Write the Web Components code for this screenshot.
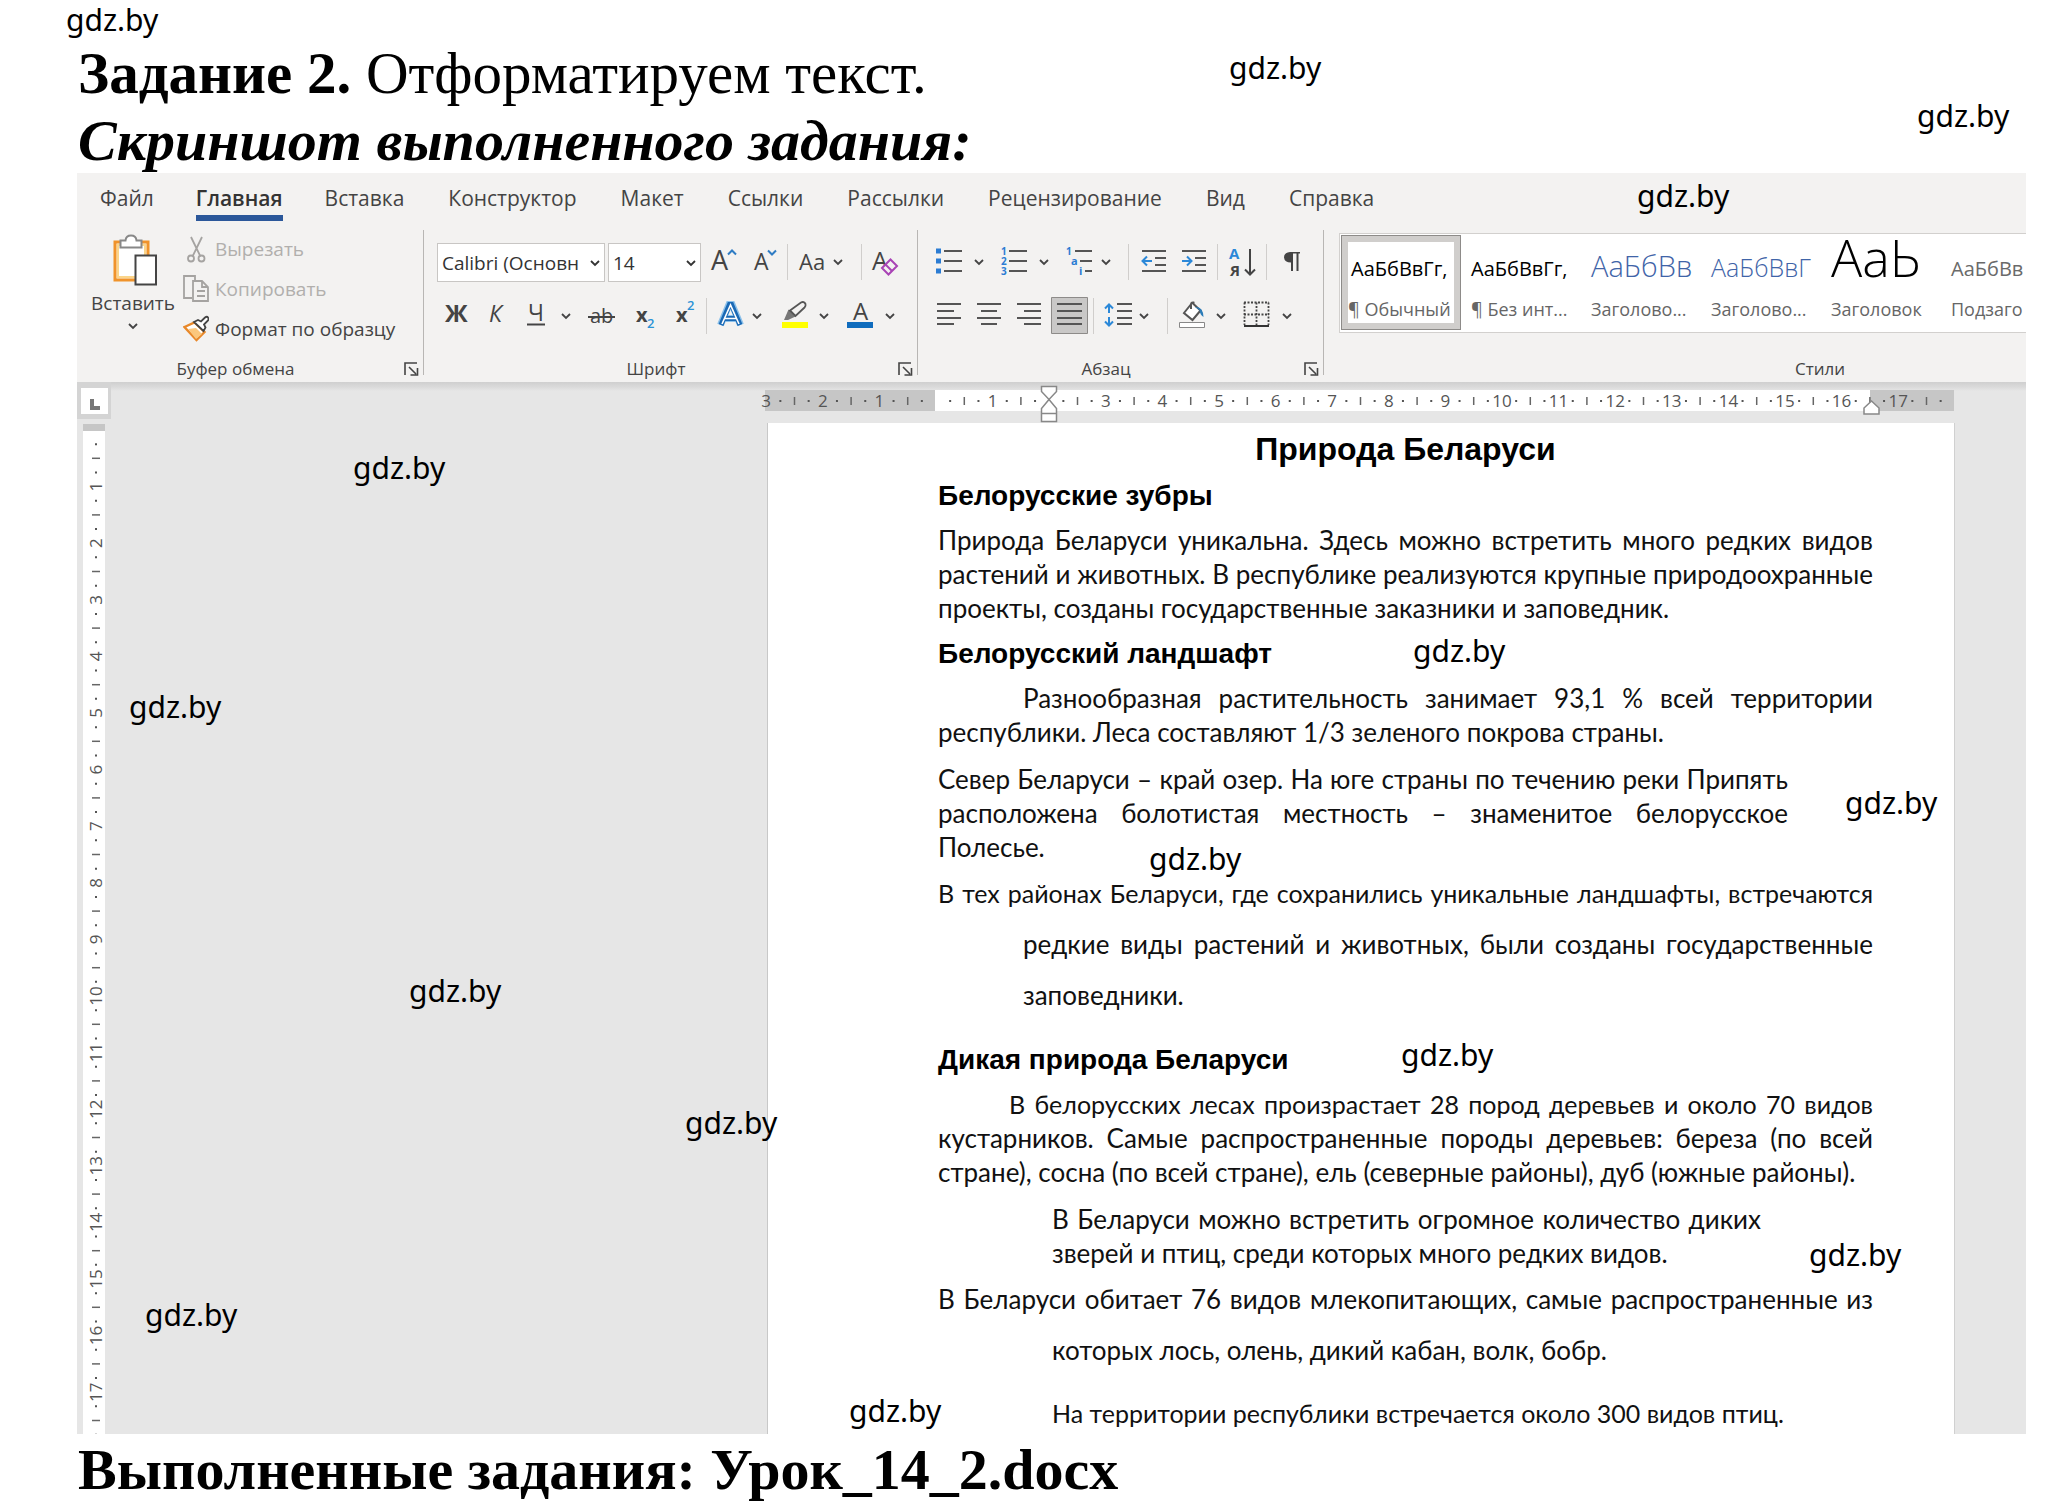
<!DOCTYPE html>
<html lang="ru">
<head>
<meta charset="utf-8">
<title>Задание 2. Отформатируем текст</title>
<style>
html,body{margin:0;background:#fff}
body{overflow-x:hidden}
</style>
</head>
<body>
<worksheet-page></worksheet-page>
<script>
const define=(name,html,after)=>{
  const t=document.createElement('template');
  t.innerHTML=html;
  customElements.define(name,class extends HTMLElement{
    constructor(){super();this.attachShadow({mode:'open'});}
    connectedCallback(){
      if(this.shadowRoot.childNodes.length)return;
      this.shadowRoot.append(t.content.cloneNode(true));
      if(after)after(this,this.shadowRoot);
    }
  });
};
const UI='"Open Sans","Noto Sans",sans-serif';

/* ---------- stamps laid over the sheet ---------- */
define('water-mark',`<style>
:host{position:absolute;font:30px/41px "Noto Sans",sans-serif;color:#000;pointer-events:none;white-space:nowrap}
</style><slot></slot>`);

/* ---------- ribbon tabs ---------- */
define('ribbon-tabs',`<style>
:host{display:block;font:21px/28px ${UI};color:#444}
nav{display:flex;gap:44px;padding:11px 0 0 23px}
a{color:inherit;text-decoration:none;white-space:nowrap;padding-bottom:3px;height:28px;border-bottom:6px solid transparent}
a[aria-current]{font-weight:600;color:#333;border-color:#2b579a;margin:0 -2px}
</style><nav></nav>`,(el,root)=>{
  const nav=root.querySelector('nav');
  ['Файл','Главная','Вставка','Конструктор','Макет','Ссылки','Рассылки','Рецензирование','Вид','Справка'].forEach((n,i)=>{
    const a=document.createElement('a');a.href='#';a.textContent=n;
    if(i===1)a.setAttribute('aria-current','page');
    nav.append(a);
  });
});

/* ---------- ribbon group: tools, caption, launcher ---------- */
define('ribbon-group',`<style>
:host{display:flex;flex-direction:column;flex:none;box-sizing:border-box;height:145px;border-right:1px solid #b8b6b4;font-family:${UI}}
.body{flex:1}
footer{display:flex;align-items:center;height:22px;margin-bottom:-5px}
span{flex:1;text-align:center;font-size:17px;line-height:22px;color:#444}
button{flex:none;width:29px;height:22px;padding:0 0 0 10px;border:0;background:none}
svg{display:block}
:host([plain]) button{display:none}
:host([plain]){border:0}
</style><div class="body"><slot></slot></div>
<footer><span></span><button aria-label="Параметры"><svg width="15" height="15" viewBox="0 0 15 15" fill="none" stroke="#444" stroke-width="1.6"><path d="M1 13V1H13M5 5L12 12M13.500 6V13H6.500"/></svg></button></footer>`,
(el,root)=>{root.querySelector('span').textContent=el.getAttribute('caption');});

/* ---------- row of tool buttons; every glyph is drawn in the row's own coordinates ---------- */
const chev=(x,y)=>`<path d="M${x-4} ${y-2}l4 4 4-4" fill="none" stroke="#444" stroke-width="1.800"/>`;
const line=(x1,x2,y,c='#555')=>`<path d="M${x1} ${y}H${x2}" stroke="${c}" stroke-width="2"/>`;
const txt=(x,y,s,t,extra='')=>`<text x="${x}" y="${y}" font-size="${s}" fill="#444" ${extra}>${t}</text>`;
const sep='|';
const ROWS={
 font1:{y:235,items:[
  [701,745,'Увеличить размер шрифта',txt(711,270,27,'А')+'<path d="M728 254.500l4-4 4 4" fill="none" stroke="#2e7cc4" stroke-width="2"/>'],
  [745,786,'Уменьшить размер шрифта',txt(754,270,23,'А')+'<path d="M768 250.500l4 4 4-4" fill="none" stroke="#2e7cc4" stroke-width="2"/>'],
  sep,[789,860,'Регистр',txt(799,270,22,'Аа')+chev(838,262)],
  sep,[863,909,'Очистить формат',txt(872,270,25,'А')+'<path d="M882 268l8.500-8.500 6.500 6.500-8.500 8.500z" fill="#f3f2f1" stroke="#a843b5" stroke-width="2"/><path d="M885.500 264.500l6.500 6.500" stroke="#a843b5" stroke-width="2"/>']]},
 font2:{y:289,items:[
  [437,475,'Полужирный',txt(445,322,24,'Ж','font-weight="700"')],
  [475,516,'Курсив',txt(489,322,23,'К','font-style="italic"')],
  [516,556,'Подчёркнутый',txt(528,321,23,'Ч')+line(527,545,324.500,'#444')],
  [556,576,'Вид подчёркивания',chev(566,316)],
  [576,626,'Зачёркнутый',txt(590,323,20,'ab')+line(588,615,317,'#444')],
  [626,665,'Подстрочный знак',txt(636,322,20,'x','font-weight="700"')+txt(647,328,13,'2','font-weight="600" style="fill:#2b93d6"')],
  [665,705,'Надстрочный знак',txt(676,322,20,'x','font-weight="700"')+txt(687,310,13,'2','font-weight="600" style="fill:#2b93d6"')],
  sep,[708,748,'Текстовые эффекты','<g fill="none" stroke-linejoin="miter"><path d="M720.500 325L729 304.500H732L740.500 325M724.500 318.500H736.500" stroke="#8cc1ea" stroke-width="7"/><path d="M721 325L729.500 304.500H731.500L740 325M724.500 318.500H736.500" stroke="#1a69b5" stroke-width="5"/><path d="M722 324L730.500 305L739 324M725 318.500H736" stroke="#fff" stroke-width="1.600"/></g>'],
  [748,768,'Ещё эффекты',chev(757,316)],
  [768,814,'Цвет выделения','<path d="M784 320l4.500-10.500 7 7L788 320zM785 320.500l4-1" fill="#777"/><path d="M790 310.500L801 302.500Q804 301 805.500 304Q806 306 804.500 307.500L795.500 316z" fill="#f3f2f1" stroke="#555" stroke-width="1.800"/><path d="M782 322h26v6h-26z" fill="#ff0"/>'],
  [814,834,'Ещё цвета выделения',chev(824,316)],
  [834,880,'Цвет текста',txt(853,320,24,'А')+'<path d="M847 322h26v6h-26z" fill="#0f6cbd"/>'],
  [880,900,'Ещё цвета текста',chev(890,316)]]},
 par1:{y:235,items:[
  [931,969,'Маркеры','<path d="M936 248.500h5v5h-5zM936 258.500h5v5h-5zM936 268.500h5v5h-5z" fill="#2b7cd3"/>'+line(944,962,251)+line(944,962,261)+line(944,962,271)],
  [969,990,'Вид маркеров',chev(979,262)],
  [990,1034,'Нумерация',['1','2','3'].map((n,i)=>txt(1001,255+i*10,10,n,'font-weight="700" style="fill:#2b7cd3"')).join('')+line(1009,1027,251)+line(1009,1027,261)+line(1009,1027,271)],
  [1034,1055,'Вид нумерации',chev(1044,262)],
  [1055,1097,'Многоуровневый список',txt(1066,255,10,'1','font-weight="700" style="fill:#2b7cd3"')+txt(1071,265,11,'a','font-weight="700" style="fill:#2b7cd3"')+txt(1079,275,11,'i','font-weight="700" style="fill:#2b7cd3"')+line(1075,1092,251)+line(1080,1092,261)+line(1085,1092,271)],
  [1097,1127,'Вид списка',chev(1106,262)],
  sep,[1130,1174,'Уменьшить отступ',line(1142,1166,251)+line(1155,1166,258)+line(1155,1166,265)+line(1142,1166,271)+'<path d="M1152 261H1143M1147 256.500L1142.500 261L1147 265.500" fill="none" stroke="#2b88d8" stroke-width="2"/>'],
  [1174,1216,'Увеличить отступ',line(1182,1206,251)+line(1195,1206,258)+line(1195,1206,265)+line(1182,1206,271)+'<path d="M1182 261H1191M1187 256.500L1191.500 261L1187 265.500" fill="none" stroke="#2b88d8" stroke-width="2"/>'],
  sep,[1219,1265,'Сортировка',txt(1229,259,15,'А','font-weight="700" style="fill:#2b88d8"')+txt(1230,276,15,'Я','font-weight="700"')+'<path d="M1250 249V274M1245 269.500l5 5 5-5" fill="none" stroke="#444" stroke-width="2"/>'],
  sep,[1268,1316,'Знаки абзаца','<path d="M1300 252H1290Q1284 252.500 1284 257.500Q1284.500 262.500 1291 262.500V271H1293V253.500H1296.500V271H1298.500V253.500H1300z" fill="#444"/>']]},
 par2:{y:289,items:[
  [931,970,'По левому краю',line(937,961,304)+line(937,954,311)+line(937,961,318)+line(937,954,324)],
  [970,1010,'По центру',line(977,1001,304)+line(981,997,311)+line(977,1001,318)+line(981,997,324)],
  [1010,1050,'По правому краю',line(1017,1041,304)+line(1024,1041,311)+line(1017,1041,318)+line(1024,1041,324)],
  [1050,1092,'По ширине','<path d="M1051.500 297.500h36v36h-36z" fill="#c9c8c7" stroke="#8d8b89"/>'+[304,311,318,324].map(y=>line(1057,1082,y)).join('')],
  sep,[1095,1135,'Интервал','<path d="M1109 304V326M1105 308.500l4-4 4 4M1105 321.500l4 4 4-4" fill="none" stroke="#2b88d8" stroke-width="2"/><path d="M1106 315h6" stroke="#f3f2f1" stroke-width="4"/>'+[304,311,318,324].map(y=>line(1117,1132,y)).join('')],
  [1135,1166,'Ещё интервалы',chev(1144,316)],
  sep,[1169,1211,'Заливка','<path d="M1192 303L1184 313L1192.500 320L1200.500 310.500L1193.500 304V302.500Q1190.500 302 1191 306V309" fill="#fff" stroke="#555" stroke-width="2"/><path d="M1195 307Q1203 306 1203.500 317Q1200 315 1199.500 310z" fill="#2b7cb8"/><path d="M1179.500 322.500h25v5h-25z" fill="#fff" stroke="#888"/>'],
  [1211,1232,'Цвет заливки',chev(1221,316)],
  [1232,1277,'Границы','<path d="M1244.500 302.500V325M1268.500 302.500V325M1256.500 302.500V325M1244 302.500H1269M1244 314.500H1269" fill="none" stroke="#444" stroke-width="1.800" stroke-dasharray="2 1.500"/>'+line(1244,1269,326,'#333')],
  [1277,1298,'Вид границ',chev(1287,316)]]}
};
define('tool-row',`<style>
:host{display:flex;height:54px}
button{flex:none;padding:0;border:0;background:none}
svg{display:block;font-family:${UI};overflow:visible}
i{flex:none;width:1px;height:36px;margin:9px 1px;background:#d0cecc}
</style><slot></slot>`,(el,root)=>{
  const r=ROWS[el.getAttribute('set')];
  for(const it of r.items){
    if(it===sep){root.append(document.createElement('i'));continue;}
    const [a,b,label,g]=it,bt=document.createElement('button');
    bt.setAttribute('aria-label',label);
    bt.style.width=(b-a)+'px';
    bt.innerHTML=`<svg width="${b-a}" height="54" viewBox="${a} ${r.y} ${b-a} 54">${g}</svg>`;
    root.append(bt);
  }
});

/* ---------- drop-down with its own arrow ---------- */
define('combo-box',`<style>
:host{display:grid;flex:none;box-sizing:border-box;height:39px;margin-top:8px;align-items:center}
select{grid-area:1/1;width:100%;height:39px;box-sizing:border-box;appearance:none;border:1px solid #c8c6c4;border-radius:0;background:#fff;color:#333;font:19px/26px ${UI};padding:0 18px 0 4px;margin:0}
svg{grid-area:1/1;justify-self:end;margin-right:5px;pointer-events:none}
</style><select></select><svg width="10" height="8" viewBox="0 0 10 8" fill="none" stroke="#333" stroke-width="1.800"><path d="M1 2l4 4 4-4"/></svg>`,(el,root)=>{
  const s=root.querySelector('select');s.setAttribute('aria-label',el.getAttribute('label'));
  s.append(new Option(el.getAttribute('value')));
});

/* ---------- clipboard tools ---------- */
define('clipboard-tools',`<style>
:host{display:flex;font:19px/26px ${UI};color:#444}
button{display:flex;align-items:center;border:0;background:none;padding:0;margin:0;font:inherit;color:inherit;white-space:nowrap}
.paste{flex-direction:column;width:80px;margin:3px 10px 0 16px}
.paste svg.a{margin-bottom:3px}
.list{display:flex;flex-direction:column;margin-top:-1px}
.list button{height:40px;gap:6px}
button:disabled{color:#b1afad}
svg{display:block;flex:none}
</style>
<button class="paste"><svg class="a" width="48" height="54" viewBox="111 234 48 54" fill="none"><path d="M117 243h33v38h-33z" fill="#fdf3dc" stroke="#f0932b" stroke-width="3"/><path d="M120 246h27v32h-27z" fill="#fff" stroke="#fbd58a" stroke-width="2"/><path d="M122.500 248.500v-7h5q.500-5 5.500-5t5.500 5h5v7z" fill="#fff" stroke="#888" stroke-width="2"/><path d="M137.500 256.500h20.500v29h-20.500z" fill="#fff" stroke="#444" stroke-width="2"/></svg>
Вставить<svg width="12" height="18" viewBox="0 0 12 18" fill="none" stroke="#444" stroke-width="1.800"><path d="M2 8l4 4 4-4"/></svg></button>
<div class="list">
<button disabled><svg width="26" height="28" viewBox="183 235 26 28" fill="none" stroke="#a5a3a1" stroke-width="1.800"><path d="M191 237l9.500 19.500M202 237l-9.500 19.500"/><circle cx="191" cy="258.500" r="3"/><circle cx="201.500" cy="258.500" r="3"/></svg>Вырезать</button>
<button disabled><svg width="26" height="28" viewBox="183 275 26 28" fill="none" stroke="#a5a3a1" stroke-width="1.800"><path d="M192 298h-8V276h11v4"/><path d="M193 281h9l6 6v14h-15zM202 281v6h6M197 291h8M197 296h8"/></svg>Копировать</button>
<button><svg width="26" height="28" viewBox="183 314 26 28" fill="none"><path d="M184.500 326l10-4.500 10 9.500-8 8z" fill="#fff" stroke="#e8892b" stroke-width="2.400"/><path d="M188 328l8-1 6 6-6 5z" fill="#fbc77d"/><path d="M194 321l4-2 3 1.500 4-4q2-1.500 3 0t0 3l-4 4 1.500 3-2 3.500z" fill="#fff" stroke="#444" stroke-width="1.800"/></svg>Формат по образцу</button>
</div>`);

/* ---------- style gallery card; --l keeps samples of all sizes on one baseline ---------- */
define('style-card',`<style>
:host{display:block;flex:none;width:120px;height:95px}
button{display:flex;flex-direction:column;width:120px;height:95px;box-sizing:border-box;border:0;background:none;padding:5px 10px 0;text-align:left;font-family:${UI}}
:host([selected]) button{border:1px solid #8d8b89;outline:6px solid #d0cecc;outline-offset:-7px;padding:4px 9px 0}
.p{height:58px;line-height:var(--l,58px);white-space:nowrap;color:var(--c,#000);font-size:var(--s,20px);font-weight:var(--w,400)}
.n{display:block;width:108px;font-size:18px;line-height:22px;color:#666;white-space:nowrap}
:host([selected]) .n{margin-left:-3px}
</style><button><span class="p"></span><span class="n"><slot></slot></span></button>`,(el,root)=>{
  root.querySelector('.p').textContent=el.getAttribute('sample');
});

/* ---------- ribbon ---------- */
define('word-ribbon',`<style>
:host{display:block;height:209px;overflow:hidden;background:#f3f2f1}
.groups{display:flex;padding-top:9px}
.row{display:flex}
.clip{width:347px}.font{width:494px}.par{width:406px}.styles{width:992px}
.pad{padding:5px 0 0 13px}
combo-box:first-of-type{width:168px;margin-right:3px}
.size{width:93px}
.gallery{display:flex;margin:3px 0 0 15px;padding:1px;border:1px solid #d2d0ce;background:#fff;height:96px}
</style>
<ribbon-tabs></ribbon-tabs>
<div class="groups">
<ribbon-group class="clip" caption="Буфер обмена"><clipboard-tools></clipboard-tools></ribbon-group>
<ribbon-group class="font" caption="Шрифт"><div class="pad">
<div class="row"><combo-box label="Шрифт" value="Calibri (Основн"></combo-box><combo-box class="size" label="Размер" value="14"></combo-box><tool-row set="font1"></tool-row></div>
<tool-row set="font2"></tool-row></div></ribbon-group>
<ribbon-group class="par" caption="Абзац"><div class="pad"><tool-row set="par1"></tool-row><tool-row set="par2"></tool-row></div></ribbon-group>
<ribbon-group class="styles" plain caption="Стили"><div class="gallery">
<style-card selected sample="АаБбВвГг,">¶ Обычный</style-card>
<style-card sample="АаБбВвГг,">¶ Без инт...</style-card>
<style-card sample="АаБбВв" style="--s:29px;--l:51px;--c:#3f64a8;--w:300">Заголово...</style-card>
<style-card sample="АаБбВвГ" style="--s:25px;--l:54px;--c:#3f64a8;--w:300">Заголово...</style-card>
<style-card sample="АаЬ" style="--s:52px;--l:33px;--w:300">Заголовок</style-card>
<style-card sample="АаБбВв" style="--c:#6a6a6a">Подзаго</style-card>
</div></ribbon-group>
</div>`);

/* ---------- rulers ---------- */
const marks=(from,to,zero,pos)=>{
  let s='';
  for(let q=from;q<=to;q++){
    if(q===0)continue;
    const p=zero+q*56.6/4,m=((q%4)+4)%4;
    s+=m===0?pos.num(p,Math.abs(q/4)):m===2?pos.tick(p):pos.dot(p);
  }
  return s;
};
define('ruler-top',`<style>:host{display:block}svg{display:block;overflow:visible;font:17px ${UI}}</style>`,(el,root)=>{
  const g=marks(-12,71,936,{
    num:(p,n)=>n===2&&p>935?'':`<text x="${p}" y="407" text-anchor="middle" fill="#555">${n}</text>`,
    tick:p=>`<path d="M${p} 397v8" stroke="#666" stroke-width="1.500"/>`,
    dot:p=>`<path d="M${p-1} 400h2v2h-2z" fill="#555"/>`});
  root.innerHTML+=`<svg width="1187" height="40" viewBox="767 383 1187 40"><path d="M765 390h1189v21H765z" fill="#c6c6c6"/><path d="M935 390h935v21H935z" fill="#fff"/>${g}
  <g fill="#fff" stroke="#888" stroke-width="1.500"><path d="M1041.500 386.500h15v5l-7.500 8-7.500-8zM1049 399.500l7.500 9v5h-15v-5zM1041.500 413.500h15v8h-15zM1871.500 401l7.500 7v6h-15v-6z"/></g></svg>`;
});
define('ruler-side',`<style>:host{display:block}svg{display:block;font:17px ${UI}}</style>`,(el,root)=>{
  const g=marks(1,71,430,{
    num:(p,n)=>`<text transform="translate(102 ${p}) rotate(-90)" text-anchor="middle" fill="#555">${n}</text>`,
    tick:p=>`<path d="M92 ${p}h8" stroke="#666" stroke-width="1.500"/>`,
    dot:p=>`<path d="M95 ${p-1}h2v2h-2z" fill="#555"/>`});
  root.innerHTML+=`<svg width="34" height="1052" viewBox="77 382 34 1052"><path d="M77 382h34v37H77z" fill="#d4d4d4"/><path d="M81 388h27v26H81z" fill="#fff"/><path d="M90 399h4v7h6v4H90z" fill="#777"/><path d="M83 424h22v1010H83z" fill="#fff"/><path d="M83 424h22v7H83z" fill="#c6c6c6"/>${g}</svg>`;
});

/* ---------- document sheet ---------- */
define('doc-sheet',`<style>
:host{display:block;box-sizing:border-box;background:#fff;border-left:1px solid #c8c8c8;padding:8px 81px 4px 170px;color:#000;font:26px/34px "Lato","Open Sans",sans-serif;box-shadow:1px 0 #d0d0d0}
h2,h3,p{margin:0}
h2{font:700 32px/36px "Liberation Sans",Arial,sans-serif;text-align:center}
h3{font:700 28px/32px "Liberation Sans",Arial,sans-serif;margin:13px 0 11px}
p{margin-bottom:13px;color:#111}
span{display:block;white-space:nowrap}
.j{text-align-last:justify}
.tight{font-size:25px}
.first span:first-child{padding-left:85px}
.short.first span:first-child{padding-left:71px}
.right{padding-right:85px}
.both{padding:0 112px 0 114px}
.hang{line-height:51px;margin:-9px 0 23px}
.hang span+span{padding-left:85px}
.hang.far span+span,.in{padding-left:114px}
.hang.far{margin-bottom:20px}
.in{margin:0}
</style>
<h2>Природа Беларуси</h2>
<h3>Белорусские зубры</h3>
<p><span class="j">Природа Беларуси уникальна. Здесь можно встретить много редких видов</span><span class="j">растений и животных. В республике реализуются крупные природоохранные</span><span>проекты, созданы государственные заказники и заповедник.</span></p>
<h3>Белорусский ландшафт</h3>
<p class="first"><span class="j">Разнообразная растительность занимает 93,1 % всей территории</span><span>республики. Леса составляют 1/3 зеленого покрова страны.</span></p>
<p class="right"><span class="j">Север Беларуси – край озер. На юге страны по течению реки Припять</span><span class="j">расположена болотистая местность – знаменитое белорусское</span><span>Полесье.</span></p>
<p class="hang"><span class="j tight">В тех районах Беларуси, где сохранились уникальные ландшафты, встречаются</span><span class="j">редкие виды растений и животных, были созданы государственные</span><span>заповедники.</span></p>
<h3>Дикая природа Беларуси</h3>
<p class="first short"><span class="j tight">В белорусских лесах произрастает 28 пород деревьев и около 70 видов</span><span class="j">кустарников. Самые распространенные породы деревьев: береза (по всей</span><span>стране), сосна (по всей стране), ель (северные районы), дуб (южные районы).</span></p>
<p class="both"><span class="j">В Беларуси можно встретить огромное количество диких</span><span>зверей и птиц, среди которых много редких видов.</span></p>
<p class="hang far"><span class="j">В Беларуси обитает 76 видов млекопитающих, самые распространенные из</span><span>которых лось, олень, дикий кабан, волк, бобр.</span></p>
<p class="in"><span class="tight">На территории республики встречается около 300 видов птиц.</span></p>`);

/* ---------- editor window ---------- */
define('word-window',`<style>
:host{display:block;background:#e6e6e6}
.work{display:flex;justify-content:space-between;background:linear-gradient(#cfcfcf 0,#dadada 5px,#e6e6e6 9px)}
ruler-side{flex:none}
main{flex:none;width:1187px;margin:1px 72px 0 0}
</style>
<word-ribbon></word-ribbon>
<div class="work"><ruler-side></ruler-side><main><ruler-top></ruler-top><doc-sheet></doc-sheet></main></div>`);

/* ---------- whole sheet ---------- */
define('worksheet-page',`<style>
:host{display:block;position:relative;padding:40px 46px 0 77px;overflow:hidden}
h1,p{margin:0;padding-left:1px;font:58px/67px "Liberation Serif","Times New Roman",serif;color:#000;white-space:nowrap}
h1{font-size:59px}
h1 b,.b{font-weight:700}
.i{font-weight:700;font-style:italic;height:66px}
.b{padding-top:2px}
</style>
<h1><b>Задание 2.</b> Отформатируем текст.</h1>
<p class="i">Скриншот выполненного задания:</p>
<word-window></word-window>
<p class="b">Выполненные задания: Урок_14_2.docx</p>`,(el,root)=>{
  [[66,-1],[1229,47],[1917,95],[1637,175],[353,447],[1413,630],[129,686],[1845,782],[1149,838],[409,970],[1401,1034],[685,1102],[1809,1234],[145,1294],[849,1390]].forEach(([x,y])=>{
    const w=document.createElement('water-mark');w.textContent='gdz.by';
    w.style.left=x+'px';w.style.top=y+'px';root.append(w);
  });
});
</script>
</body>
</html>
